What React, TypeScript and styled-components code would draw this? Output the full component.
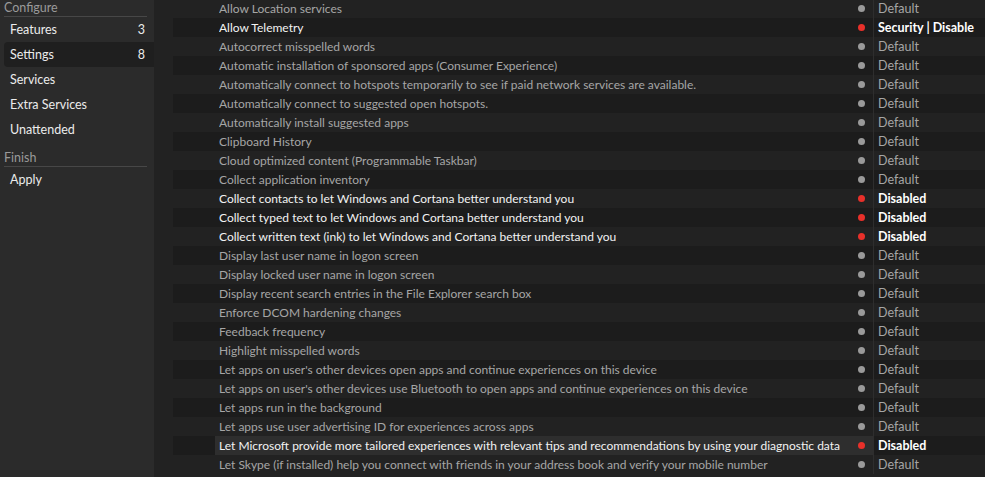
import React from "react";
import styled, { createGlobalStyle } from "styled-components";

const Global = createGlobalStyle`
  html, body { margin: 0; padding: 0; background: #222222; overflow: hidden; }
  body { font-family: Lato, "Noto Sans", sans-serif; font-size: 12px; }
  #root { height: 477px; }
`;

const Page = styled.div`
  display: flex;
  width: 985px;
  height: 477px;
  overflow: hidden;
  background: #222222;
`;

const Sidebar = styled.nav`
  width: 154px;
  flex: none;
  background: #2b2b2b;
  padding: 0 0 0 4px;
  box-sizing: border-box;
`;

const SectionTitle = styled.div`
  color: #9a9a9a;
  font-size: 12.5px;
  height: 16px;
  line-height: 16px;
  margin-right: 7px;
  border-bottom: 1px solid #474747;
`;

const NavItem = styled.div<{ $active?: boolean }>`
  display: flex;
  justify-content: space-between;
  align-items: center;
  height: 25px;
  padding: 0 9px 0 6px;
  color: #ececec;
  font-size: 12.5px;
  background: ${(p) => (p.$active ? "#1f1f1f" : "transparent")};
  border-radius: 4px 0 0 4px;
`;

const Gap = styled.div`
  height: 8px;
`;

const Main = styled.main`
  flex: 1;
  min-width: 0;
  padding-left: 19px;
  margin-top: -1px;
`;

const Row = styled.div<{ $alt: boolean }>`
  display: flex;
  height: 19px;
  align-items: stretch;
  padding-left: 42px;
  background: ${(p) => (p.$alt ? "#1c1c1c" : "transparent")};
`;

const LabelCell = styled.div<{ $sel?: boolean }>`
  flex: 1;
  min-width: 0;
  display: flex;
  align-items: center;
  padding-left: 4px;
  background: ${(p) => (p.$sel ? "#2e2e2e" : "transparent")};
`;

const Label = styled.span<{ $on: boolean }>`
  flex: 1;
  min-width: 0;
  overflow: hidden;
  color: ${(p) => (p.$on ? "#f2f2f2" : "#a6a6a6")};
  white-space: nowrap;
`;

const Dot = styled.span<{ $on: boolean }>`
  width: 7px;
  height: 7px;
  border-radius: 50%;
  background: ${(p) => (p.$on ? "#e8302a" : "#9a9a9a")};
  margin: 0 8px 0 4px;
  flex: none;
`;

const ValueCell = styled.div<{ $on: boolean }>`
  width: 112px;
  flex: none;
  display: flex;
  align-items: center;
  padding-left: 4px;
  box-sizing: border-box;
  border-left: 1px solid #2e2e2e;
  color: ${(p) => (p.$on ? "#ffffff" : "#a6a6a6")};
  font-weight: ${(p) => (p.$on ? 700 : 400)};
  font-size: 12.5px;
  white-space: nowrap;
`;

type Item = { label: string; value?: string; sel?: boolean };

const items: Item[] = [
  { label: "Allow Location services" },
  { label: "Allow Telemetry", value: "Security | Disable" },
  { label: "Autocorrect misspelled words" },
  { label: "Automatic installation of sponsored apps (Consumer Experience)" },
  { label: "Automatically connect to hotspots temporarily to see if paid network services are available." },
  { label: "Automatically connect to suggested open hotspots." },
  { label: "Automatically install suggested apps" },
  { label: "Clipboard History" },
  { label: "Cloud optimized content (Programmable Taskbar)" },
  { label: "Collect application inventory" },
  { label: "Collect contacts to let Windows and Cortana better understand you", value: "Disabled" },
  { label: "Collect typed text to let Windows and Cortana better understand you", value: "Disabled" },
  { label: "Collect written text (ink) to let Windows and Cortana better understand you", value: "Disabled" },
  { label: "Display last user name in logon screen" },
  { label: "Display locked user name in logon screen" },
  { label: "Display recent search entries in the File Explorer search box" },
  { label: "Enforce DCOM hardening changes" },
  { label: "Feedback frequency" },
  { label: "Highlight misspelled words" },
  { label: "Let apps on user's other devices open apps and continue experiences on this device" },
  { label: "Let apps on user's other devices use Bluetooth to open apps and continue experiences on this device" },
  { label: "Let apps run in the background" },
  { label: "Let apps use user advertising ID for experiences across apps" },
  { label: "Let Microsoft provide more tailored experiences with relevant tips and recommendations by using your diagnostic data", value: "Disabled", sel: true },
  { label: "Let Skype (if installed) help you connect with friends in your address book and verify your mobile number" },
];

export default function App() {
  return (
    <Page>
      <Global />
      <Sidebar>
        <SectionTitle>Configure</SectionTitle>
        <NavItem>
          <span>Features</span>
          <span>3</span>
        </NavItem>
        <NavItem $active>
          <span>Settings</span>
          <span>8</span>
        </NavItem>
        <NavItem>Services</NavItem>
        <NavItem>Extra Services</NavItem>
        <NavItem>Unattended</NavItem>
        <Gap />
        <SectionTitle>Finish</SectionTitle>
        <NavItem>Apply</NavItem>
      </Sidebar>
      <Main>
        {items.map((it, i) => {
          const on = !!it.value;
          return (
            <Row key={it.label} $alt={i % 2 === 1}>
              <LabelCell $sel={it.sel}>
                <Label $on={on}>{it.label}</Label>
                <Dot $on={on} />
              </LabelCell>
              <ValueCell $on={on}>{it.value ?? "Default"}</ValueCell>
            </Row>
          );
        })}
      </Main>
    </Page>
  );
}
